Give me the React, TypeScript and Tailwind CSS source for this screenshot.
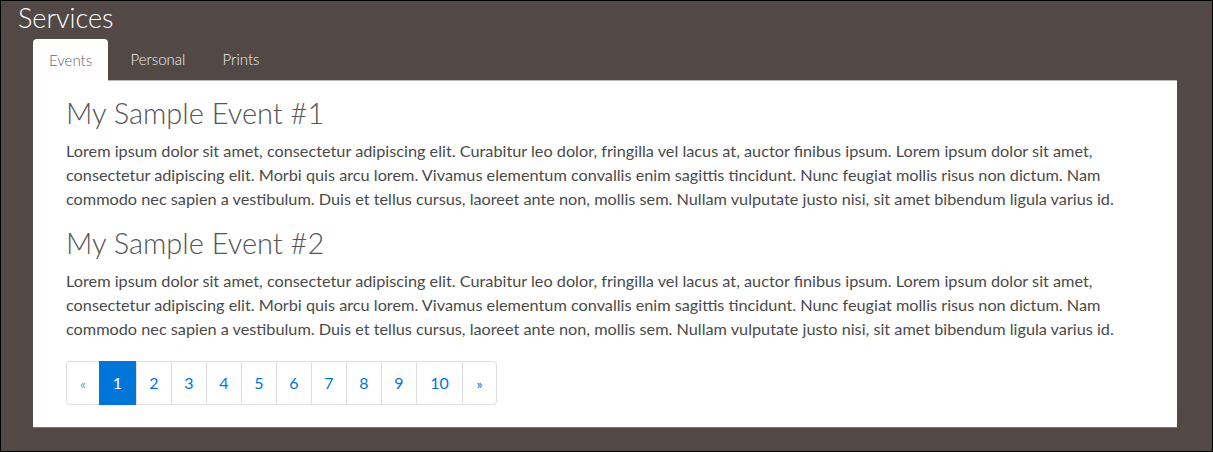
import React from "react";

const para =
  "Lorem ipsum dolor sit amet, consectetur adipiscing elit. Curabitur leo dolor, fringilla vel lacus at, auctor finibus ipsum. Lorem ipsum dolor sit amet, consectetur adipiscing elit. Morbi quis arcu lorem. Vivamus elementum convallis enim sagittis tincidunt. Nunc feugiat mollis risus non dictum. Nam commodo nec sapien a vestibulum. Duis et tellus cursus, laoreet ante non, mollis sem. Nullam vulputate justo nisi, sit amet bibendum ligula varius id.";

const pages = ["1", "2", "3", "4", "5", "6", "7", "8", "9", "10"];

export default function App() {
  return (
    <div
      className="w-[1213px] h-[452px] box-border border border-black bg-[#524947] overflow-hidden"
      style={{ fontFamily: "Lato, 'Open Sans', sans-serif" }}
    >
      <div className="pl-[17px] pt-[1px] text-[27px] leading-[32px] font-light text-white">
        Services
      </div>
      <div className="ml-[32px] mt-[5px] w-[1144px]">
        <div className="flex border-b border-[#bdb8b7] h-[42px]">
          <div className="w-[75px] h-[43px] bg-white rounded-t-[4px] flex items-center justify-center text-[15px] font-light text-[#666] pb-[1px]">
            Events
          </div>
          <div className="ml-[4px] w-[92px] flex items-center justify-center text-[15px] font-light text-[#eee]">
            Personal
          </div>
          <div className="ml-[2px] w-[70px] flex items-center justify-center text-[15px] font-light text-[#eee]">
            Prints
          </div>
        </div>
        <div className="bg-white px-[33px] pt-[14px] pb-[23px] h-[347px] box-border border-b border-[#7a7270]">
          <h2 className="text-[29px] leading-[36px] font-light text-[#555] mb-[8px]">
            My Sample Event #1
          </h2>
          <p className="text-[16.25px] leading-[24px] text-[#4a4a4a]">{para}</p>
          <h2 className="text-[29px] leading-[36px] font-light text-[#555] mt-[14px] mb-[8px]">
            My Sample Event #2
          </h2>
          <p className="text-[16.25px] leading-[24px] text-[#4a4a4a]">{para}</p>
          <div className="mt-[20px] inline-flex h-[44px] border border-[#ddd] rounded-[4px] text-[16px]">
            <div className="w-[32px] flex items-center justify-center text-[#999] text-[14px]">«</div>
            {pages.map((p, i) => (
              <div
                key={p}
                className={
                  i === 0
                    ? "w-[37px] flex items-center justify-center bg-[#0275d8] text-white -my-[1px]"
                    : "flex items-center justify-center text-[#0275d8] border-l border-[#ddd] " +
                      (p === "10" ? "w-[46px]" : "w-[35px]")
                }
              >
                {p}
              </div>
            ))}
            <div className="w-[34px] flex items-center justify-center text-[#0275d8] text-[14px] border-l border-[#ddd]">»</div>
          </div>
        </div>
      </div>
    </div>
  );
}
